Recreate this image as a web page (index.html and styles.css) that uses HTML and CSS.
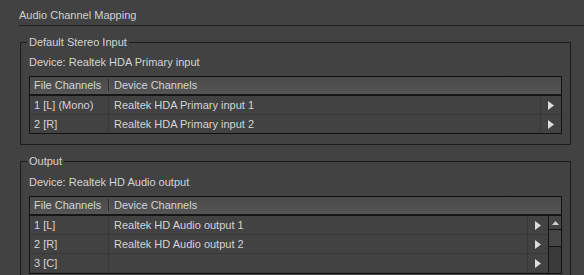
FILE: index.html
```html
<!DOCTYPE html>
<html lang="en">
<head>
    <meta charset="UTF-8">
    <title>Audio Channel Mapping</title>
    <link rel="stylesheet" href="styles.css">
</head>
<body>
    <div class="title">Audio Channel Mapping</div>

    <fieldset class="group">
        <legend>Default Stereo Input</legend>
        <div class="device">Device: Realtek HDA Primary input</div>
        <div class="table">
            <div class="head">
                <div class="hcell first">File Channels</div>
                <div class="hcell">Device Channels</div>
            </div>
            <div class="rows">
                <div class="row">
                    <div class="cell first">1 [L] (Mono)</div>
                    <div class="cell">Realtek HDA Primary input 1</div>
                    <div class="cell arrow"><svg width="6" height="9" viewBox="0 0 6 9"><polygon points="0,0 6,4.5 0,9" fill="#dcdcdc"/></svg></div>
                </div>
                <div class="row">
                    <div class="cell first">2 [R]</div>
                    <div class="cell">Realtek HDA Primary input 2</div>
                    <div class="cell arrow"><svg width="6" height="9" viewBox="0 0 6 9"><polygon points="0,0 6,4.5 0,9" fill="#dcdcdc"/></svg></div>
                </div>
            </div>
        </div>
    </fieldset>

    <fieldset class="group output">
        <legend>Output</legend>
        <div class="device">Device: Realtek HD Audio output</div>
        <div class="table">
            <div class="head">
                <div class="hcell first">File Channels</div>
                <div class="hcell">Device Channels</div>
            </div>
            <div class="body">
                <div class="rows">
                    <div class="row">
                        <div class="cell first">1 [L]</div>
                        <div class="cell">Realtek HD Audio output 1</div>
                        <div class="cell arrow"><svg width="6" height="9" viewBox="0 0 6 9"><polygon points="0,0 6,4.5 0,9" fill="#dcdcdc"/></svg></div>
                    </div>
                    <div class="row">
                        <div class="cell first">2 [R]</div>
                        <div class="cell">Realtek HD Audio output 2</div>
                        <div class="cell arrow"><svg width="6" height="9" viewBox="0 0 6 9"><polygon points="0,0 6,4.5 0,9" fill="#dcdcdc"/></svg></div>
                    </div>
                    <div class="row">
                        <div class="cell first">3 [C]</div>
                        <div class="cell"></div>
                        <div class="cell arrow"><svg width="6" height="9" viewBox="0 0 6 9"><polygon points="0,0 6,4.5 0,9" fill="#dcdcdc"/></svg></div>
                    </div>
                </div>
                <div class="scrollbar">
                    <div class="sb-up"><svg width="7" height="4" viewBox="0 0 7 4"><polygon points="0,4 3.5,0 7,4" fill="#cfcfcf"/></svg></div>
                    <div class="sb-thumb"></div>
                    <div class="sb-track"></div>
                </div>
            </div>
        </div>
    </fieldset>
</body>
</html>
```

FILE: styles.css
```css
body {
    margin: 0;
    background-color: #424242;
    font-family: "Liberation Sans", Arial, sans-serif;
    font-size: 11px;
    line-height: 13px;
    color: #d4d4d4;
    overflow: hidden;
}
.title {
    margin-left: 19px;
    padding-top: 9px;
    height: 16px;
    border-bottom: 1px solid #1e1e1e;
    color: #d0d0d0;
}
.group {
    margin: 10px 13px 0 20px;
    padding: 7px 8px 10px 8px;
    border: 1px solid #1c1c1c;
    min-width: 0;
}
.group legend {
    margin-left: -2px;
    padding: 0 2px;
}
.output {
    margin-top: 10px;
}
.output .device {
    margin-top: 1px;
}
.device {
    margin-bottom: 7px;
}
.table {
    border: 1px solid #121212;
}
.head {
    display: flex;
    height: 17px;
    border-bottom: 2px solid #161616;
    background: linear-gradient(#4a4a4a, #545454);
}
.hcell {
    padding-left: 5px;
    line-height: 17px;
    flex: 1;
}
.hcell.first {
    flex: 0 0 74px;
    padding-left: 4px;
    border-right: 1px solid #2a2a2a;
    box-shadow: 1px 0 0 #5a5a5a;
    margin: 2px 0 3px;
    line-height: 12px;
}
.row {
    display: flex;
    height: 18px;
    border-bottom: 1px solid #383838;
}
.rows .row:last-child {
    border-bottom: none;
}
.cell {
    line-height: 18px;
    padding-left: 5px;
    flex: 1;
    white-space: nowrap;
}
.cell.first {
    flex: 0 0 74px;
    padding-left: 4px;
    border-right: 1px solid #383838;
}
.cell.arrow {
    flex: 0 0 20px;
    padding: 0;
    border-left: 1px solid #383838;
    display: flex;
    align-items: center;
    justify-content: center;
}
.body {
    display: flex;
}
.body .rows {
    flex: 1;
}
.body .rows .row:last-child {
    border-bottom: 1px solid #383838;
}
.scrollbar {
    flex: 0 0 12px;
    border-left: 1px solid #141414;
    display: flex;
    flex-direction: column;
}
.sb-up {
    height: 13px;
    border-bottom: 1px solid #141414;
    background-color: #454545;
    display: flex;
    align-items: center;
    justify-content: center;
}
.sb-thumb {
    height: 16px;
    border-bottom: 1px solid #141414;
    background-color: #464646;
}
.sb-track {
    flex: 1;
    background-color: #3a3a3a;
}
```
